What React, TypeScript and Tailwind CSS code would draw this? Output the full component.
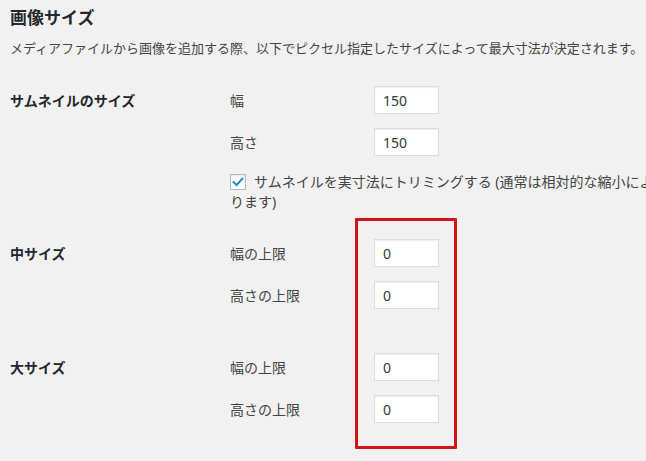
const font = "font-['Noto_Sans','Noto_Sans_CJK_JP',sans-serif]"

type SizeField = { label: string; value: string }

const SizeInput = ({ label, value }: SizeField) => (
  <div className="flex h-[28px] items-center">
    <label className="w-[144px] text-[14px] text-[#444]">{label}</label>
    <div className="flex h-[28px] w-[65px] items-center border border-[#ddd] bg-white pl-[8px] text-[14px] text-[#32373c] shadow-[inset_0_1px_2px_rgba(0,0,0,0.07)]">
      {value}
    </div>
  </div>
)

const Row = ({ title, fields, children, className }: { title: string; fields: SizeField[]; children?: React.ReactNode; className?: string }) => (
  <div className={`flex ${className ?? ""}`}>
    <div className="flex h-[28px] w-[220px] shrink-0 items-center text-[14px] font-semibold text-[#23282d]">{title}</div>
    <div className="flex flex-col gap-[14px]">
      {fields.map((f) => (
        <SizeInput key={f.label} {...f} />
      ))}
      {children}
    </div>
  </div>
)

export default function App() {
  return (
    <div className={`relative h-[461px] w-[646px] overflow-hidden bg-[#f1f1f1] pl-[10px] ${font}`}>
      <h2 className="pt-[7px] text-[17px] leading-[22px] font-bold text-[#23282d]">画像サイズ</h2>
      <p className="mt-[9px] text-[13px] leading-[20px] whitespace-nowrap text-[#444]">
        メディアファイルから画像を追加する際、以下でピクセル指定したサイズによって最大寸法が決定されます。
      </p>

      <Row
        className="mt-[28px]"
        title="サムネイルのサイズ"
        fields={[
          { label: "幅", value: "150" },
          { label: "高さ", value: "150" },
        ]}
      >
        <label className="w-[432px] pt-[2px] text-[14px] leading-[20px] text-[#444]">
          <span className="mr-[8px] inline-flex h-[16px] w-[16px] translate-y-[2px] items-center justify-center border border-[#b4b9be] bg-white shadow-[inset_0_1px_2px_rgba(0,0,0,0.1)]">
            <svg viewBox="0 0 16 16" className="h-[14px] w-[14px]">
              <path d="M3 8.2 L6.4 11.4 L13 4.2" fill="none" stroke="#1e8cbe" strokeWidth="2.4" strokeLinecap="square" />
            </svg>
          </span>
          サムネイルを実寸法にトリミングする (通常は相対的な縮小によります)
        </label>
      </Row>

      <Row
        className="mt-[27px]"
        title="中サイズ"
        fields={[
          { label: "幅の上限", value: "0" },
          { label: "高さの上限", value: "0" },
        ]}
      />

      <Row
        className="mt-[44px]"
        title="大サイズ"
        fields={[
          { label: "幅の上限", value: "0" },
          { label: "高さの上限", value: "0" },
        ]}
      />

      <div className="pointer-events-none absolute top-[218px] left-[355px] h-[231px] w-[102px] rounded-[1px] border-[3px] border-[#d0141a]" />
    </div>
  )
}
